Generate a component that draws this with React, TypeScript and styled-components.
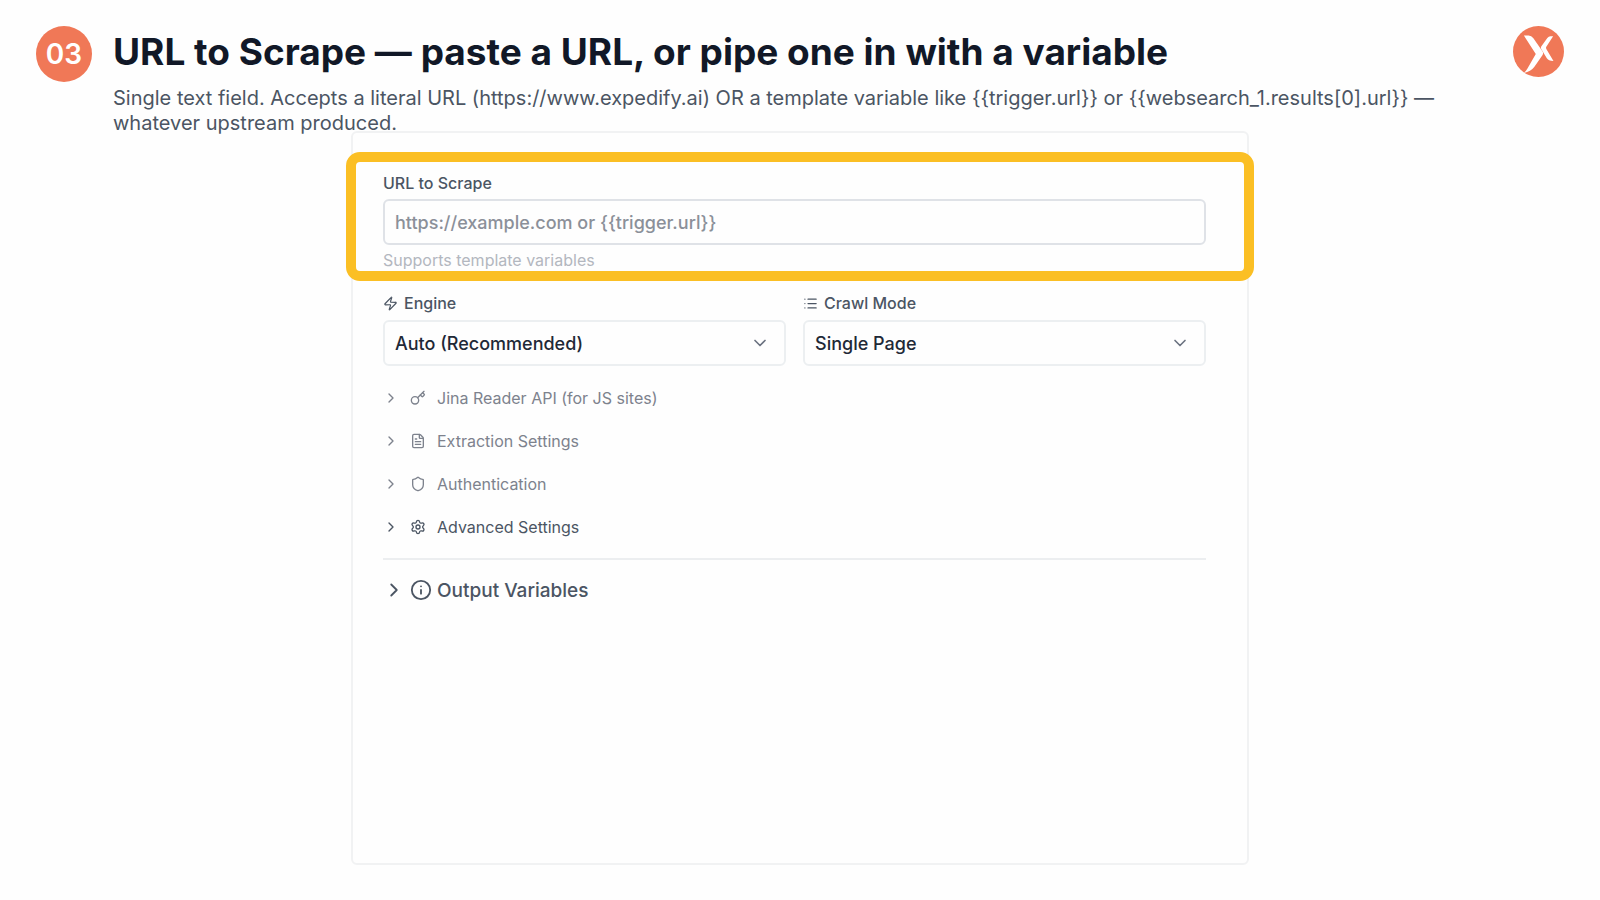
import React, { useState } from "react";
import styled, { createGlobalStyle } from "styled-components";
import {
  ChevronDown,
  ChevronRight,
  FileText,
  Info,
  Key,
  List,
  Settings,
  Shield,
  Zap,
} from "lucide-react";

const GlobalStyle = createGlobalStyle`
  * { box-sizing: border-box; }
  body {
    margin: 0;
    background: #fefefe;
    color: #111827;
    font-family: Inter, "Liberation Sans", sans-serif;
  }
  button, input, select { font: inherit; color: inherit; }
`;

const Page = styled.main`
  min-height: 100vh;
  display: flex;
  flex-direction: column;
  align-items: center;
  padding: 26px 36px 35px;
`;

const Header = styled.header`
  align-self: stretch;
  display: flex;
  align-items: flex-start;
  gap: 21px;
`;

const StepBadge = styled.span`
  flex: none;
  display: grid;
  place-items: center;
  width: 56px;
  height: 56px;
  border-radius: 50%;
  background: #f07857;
  color: #fff;
  font-size: 28px;
  font-weight: 600;
`;

const Heading = styled.div`
  flex: 1;
`;

const Title = styled.h1`
  margin: 0;
  font-size: 37px;
  line-height: 52px;
  font-weight: 700;
`;

const Subtitle = styled.p`
  margin: 8px 0 0;
  color: #4b5563;
  font-size: 20px;
  line-height: 25px;
`;

const Logo = styled.svg`
  flex: none;
  width: 51px;
  height: 51px;
`;

const Card = styled.form`
  flex: 1;
  width: calc(56vw + 2px);
  margin-top: -5px;
  padding: 19px 0 24px;
  border: 2px solid #f1f2f3;
  border-radius: 6px;
`;

const Highlight = styled.section`
  display: flex;
  flex-direction: column;
  margin: 0 -7px;
  padding: 11px 38px 1px 27px;
  border: 10px solid #fbbf24;
  border-radius: 14px;
  background: #fefefe;
`;

const Body = styled.div`
  padding: 12px 41px 0 30px;
`;

const Label = styled.label`
  display: flex;
  align-items: center;
  gap: 6px;
  color: #4b5563;
  font-size: 16px;
  line-height: 20px;
  font-weight: 500;
`;

const TextInput = styled.input`
  width: 100%;
  height: 46px;
  margin-top: 6px;
  padding: 0 10px;
  border: 2px solid #dfe2e7;
  border-radius: 6px;
  background: transparent;
  font-size: 18px;
  font-weight: 500;
  &::placeholder { color: #8b9099; opacity: 1; }
`;

const Hint = styled.p`
  margin: 5px 0 0;
  color: #b3b7bf;
  font-size: 16px;
  line-height: 20px;
`;

const Columns = styled.div`
  display: grid;
  grid-template-columns: 1fr 1fr;
  gap: 17px;
`;

const SelectBox = styled.div`
  position: relative;
  margin-top: 7px;
  svg {
    position: absolute;
    right: 16px;
    top: 13px;
    color: #6b7280;
    pointer-events: none;
  }
`;

const Select = styled.select`
  appearance: none;
  width: 100%;
  height: 46px;
  padding: 0 40px 0 10px;
  border: 2px solid #eceff1;
  border-radius: 6px;
  background: transparent;
  color: #1f2937;
  font-size: 18px;
  font-weight: 500;
`;

const Sections = styled.div`
  display: flex;
  flex-direction: column;
  padding-top: 10px;
`;

const Toggle = styled.button<{ $tone: string }>`
  display: flex;
  align-items: center;
  gap: 11px;
  height: 43px;
  padding: 0;
  border: 0;
  background: none;
  color: ${(p) => p.$tone};
  font-size: 16px;
  text-align: left;
  cursor: pointer;
`;

const OutputToggle = styled.button`
  display: flex;
  align-items: center;
  gap: 5px;
  width: 100%;
  height: 62px;
  margin-top: 10px;
  padding: 0;
  border: 0;
  border-top: 2px solid #eceef0;
  background: none;
  color: #4b5563;
  font-size: 19px;
  font-weight: 500;
  cursor: pointer;
`;

const subtitle =
  "Single text field. Accepts a literal URL (https://www.expedify.ai) OR a template variable like {{trigger.url}} or {{websearch_1.results[0].url}} — whatever upstream produced.";

const sections = [
  { name: "Jina Reader API (for JS sites)", Icon: Key, tone: "#7d828d" },
  { name: "Extraction Settings", Icon: FileText, tone: "#7d828d" },
  { name: "Authentication", Icon: Shield, tone: "#7d828d" },
  { name: "Advanced Settings", Icon: Settings, tone: "#4b5563" },
];

export default function App() {
  const [url, setUrl] = useState("");
  return (
    <>
      <GlobalStyle />
      <Page>
        <Header>
          <StepBadge>03</StepBadge>
          <Heading>
            <Title>URL to Scrape — paste a URL, or pipe one in with a variable</Title>
            <Subtitle>{subtitle}</Subtitle>
          </Heading>
          <Logo viewBox="0 0 150 150" role="img" aria-label="Expedify">
            <circle cx="75" cy="75" r="75" fill="#f07857" />
            <path
              fill="#fff"
              d="M32 28H46Q54 28 60 36L87 75Q90 80 87 85L63 120Q52 135 32 138Q38 133 43 124L67 82Z"
            />
            <path
              fill="#fff"
              d="M118 30H110Q105 30 101 35L83 60Q81 64 83 68L99 94Q104 103 119 103L98 68Q96 64 98 61Z"
            />
          </Logo>
        </Header>
        <Card onSubmit={(e) => e.preventDefault()}>
          <Highlight>
            <Label htmlFor="url">URL to Scrape</Label>
            <TextInput
              id="url"
              value={url}
              onChange={(e) => setUrl(e.target.value)}
              placeholder="https://example.com or {{trigger.url}}"
            />
            <Hint>Supports template variables</Hint>
          </Highlight>
          <Body>
            <Columns>
              <div>
                <Label htmlFor="engine">
                  <Zap size={15} /> Engine
                </Label>
                <SelectBox>
                  <Select id="engine">
                    <option>Auto (Recommended)</option>
                  </Select>
                  <ChevronDown size={20} />
                </SelectBox>
              </div>
              <div>
                <Label htmlFor="mode">
                  <List size={15} /> Crawl Mode
                </Label>
                <SelectBox>
                  <Select id="mode">
                    <option>Single Page</option>
                  </Select>
                  <ChevronDown size={20} />
                </SelectBox>
              </div>
            </Columns>
            <Sections>
              {sections.map(({ name, Icon, tone }) => (
                <Toggle key={name} type="button" $tone={tone}>
                  <ChevronRight size={16} />
                  <Icon size={16} />
                  {name}
                </Toggle>
              ))}
            </Sections>
            <OutputToggle type="button">
              <ChevronRight size={22} />
              <Info size={22} />
              Output Variables
            </OutputToggle>
          </Body>
        </Card>
      </Page>
    </>
  );
}
